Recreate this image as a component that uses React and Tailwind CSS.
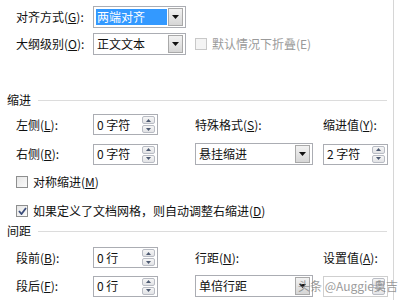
import React from 'react';

// Word-style paragraph dialog fragment

function U({ children }) {
  return <span className="underline underline-offset-[1px]">{children}</span>;
}

function DropButton({ disabled }) {
  return (
    <div className="w-[15px] h-[18px] border border-[#a9a9a9] bg-gradient-to-b from-[#f2f2f2] to-[#d6d6d6] flex items-center justify-center">
      <svg width="7" height="4" viewBox="0 0 7 4">
        <path d="M0 0h7L3.5 4z" fill={disabled ? '#a0a0a0' : '#111'} />
      </svg>
    </div>
  );
}

function Select({ value, selected, width }) {
  return (
    <div
      className={`${width} h-[22px] border border-[#abadb3] bg-white flex items-center pl-[2px] pr-[2px] gap-[1px]`}
    >
      <div
        className={`flex-1 h-[16px] flex items-center pl-[1px] ${selected ? 'bg-[#3399ff] text-white' : 'text-[#111]'}`}
      >
        {value}
      </div>
      <DropButton />
    </div>
  );
}

function SpinHalf({ up, disabled }) {
  return (
    <div className="h-[8px] w-[13px] border border-[#b9bcc4] rounded-[2px] bg-gradient-to-b from-[#f6f6f6] to-[#e2e3e6] flex items-center justify-center">
      <svg width="5" height="3" viewBox="0 0 5 3">
        <path d={up ? 'M0 3h5L2.5 0z' : 'M0 0h5L2.5 3z'} fill={disabled ? '#b8b8b8' : '#4d5a72'} />
      </svg>
    </div>
  );
}

function Spinbox({ value, disabled }) {
  return (
    <div
      className={`w-[65px] h-[21px] border ${disabled ? 'border-[#cfcfcf]' : 'border-[#abadb3]'} bg-white flex items-center pl-[3px] pr-[2px]`}
    >
      <div className="flex-1 text-[#111] whitespace-nowrap">{value}</div>
      <div className="flex flex-col gap-[1px]">
        <SpinHalf up disabled={disabled} />
        <SpinHalf disabled={disabled} />
      </div>
    </div>
  );
}

function Checkbox({ checked, disabled }) {
  return (
    <div
      className={`w-[12px] h-[12px] border flex items-center justify-center ${disabled ? 'border-[#c8c8c8] bg-[#f4f4f4]' : 'border-[#8e8f8f] bg-gradient-to-br from-[#e6e6e6] to-[#fbfbfb]'}`}
    >
      {checked && (
        <svg width="9" height="8" viewBox="0 0 9 8">
          <path d="M1 4l2.5 3L8 1" stroke="#3b4d7a" strokeWidth="1.8" fill="none" />
        </svg>
      )}
    </div>
  );
}

function Heading({ children }) {
  return (
    <div className="h-[14px] flex items-center pl-[7px] pr-[6px] gap-[7px]">
      <span className="text-[#111]">{children}</span>
      <div className="flex-1 h-px bg-[#dcdcdc]" />
    </div>
  );
}

export default function App() {
  return (
    <div className="w-[400px] h-[300px] overflow-hidden bg-white relative font-['Microsoft_YaHei','Noto_Sans_CJK_SC',sans-serif] text-[12px] leading-none text-[#111]">
      <div className="w-[394px] h-[300px] border-r border-[#d6d6d6]">
        {/* 常规 */}
        <div className="pt-[6px] pl-[16px]">
          <div className="flex items-center h-[22px]">
            <div className="w-[77px]">
              对齐方式(<U>G</U>):
            </div>
            <Select value="两端对齐" selected width="w-[93px]" />
          </div>
          <div className="flex items-center h-[22px] mt-[5px]">
            <div className="w-[77px]">
              大纲级别(<U>O</U>):
            </div>
            <Select value="正文文本" width="w-[93px]" />
            <div className="ml-[9px] flex items-center gap-[5px] text-[#9a9a9a]">
              <Checkbox disabled />
              <span>默认情况下折叠(E)</span>
            </div>
          </div>
        </div>

        {/* 缩进 */}
        <div className="mt-[38px]">
          <Heading>缩进</Heading>
        </div>
        <div className="pl-[16px]">
          <div className="flex items-center h-[21px] mt-[7px]">
            <div className="w-[77px]">
              左侧(<U>L</U>):
            </div>
            <Spinbox value="0 字符" />
            <div className="ml-[37px] w-[128px]">
              特殊格式(<U>S</U>):
            </div>
            <div>
              缩进值(<U>Y</U>):
            </div>
          </div>
          <div className="flex items-center h-[22px] mt-[8px]">
            <div className="w-[77px]">
              右侧(<U>R</U>):
            </div>
            <Spinbox value="0 字符" />
            <div className="ml-[37px] w-[128px]">
              <Select value="悬挂缩进" width="w-[118px]" />
            </div>
            <Spinbox value="2 字符" />
          </div>
          <div className="flex items-center gap-[5px] h-[14px] mt-[10px]">
            <Checkbox />
            <span>
              对称缩进(<U>M</U>)
            </span>
          </div>
          <div className="flex items-center gap-[5px] h-[14px] mt-[15px]">
            <Checkbox checked />
            <span>
              如果定义了文档网格，则自动调整右缩进(<U>D</U>)
            </span>
          </div>
        </div>

        {/* 间距 */}
        <div className="mt-[6px]">
          <Heading>间距</Heading>
        </div>
        <div className="pl-[16px]">
          <div className="flex items-center h-[21px] mt-[9px]">
            <div className="w-[77px]">
              段前(<U>B</U>):
            </div>
            <Spinbox value="0 行" />
            <div className="ml-[37px] w-[128px]">
              行距(<U>N</U>):
            </div>
            <div>
              设置值(<U>A</U>):
            </div>
          </div>
          <div className="flex items-center h-[22px] mt-[7px]">
            <div className="w-[77px]">
              段后(<U>F</U>):
            </div>
            <Spinbox value="0 行" />
            <div className="ml-[37px] w-[128px]">
              <Select value="单倍行距" width="w-[118px]" />
            </div>
            <Spinbox value="" disabled />
          </div>
        </div>
      </div>

      {/* 水印 */}
      <div className="absolute left-[298px] top-[280px] text-[12px] text-[#7a7a7a] opacity-75 whitespace-nowrap">
        头条 @Auggie奥吉
      </div>
    </div>
  );
}
